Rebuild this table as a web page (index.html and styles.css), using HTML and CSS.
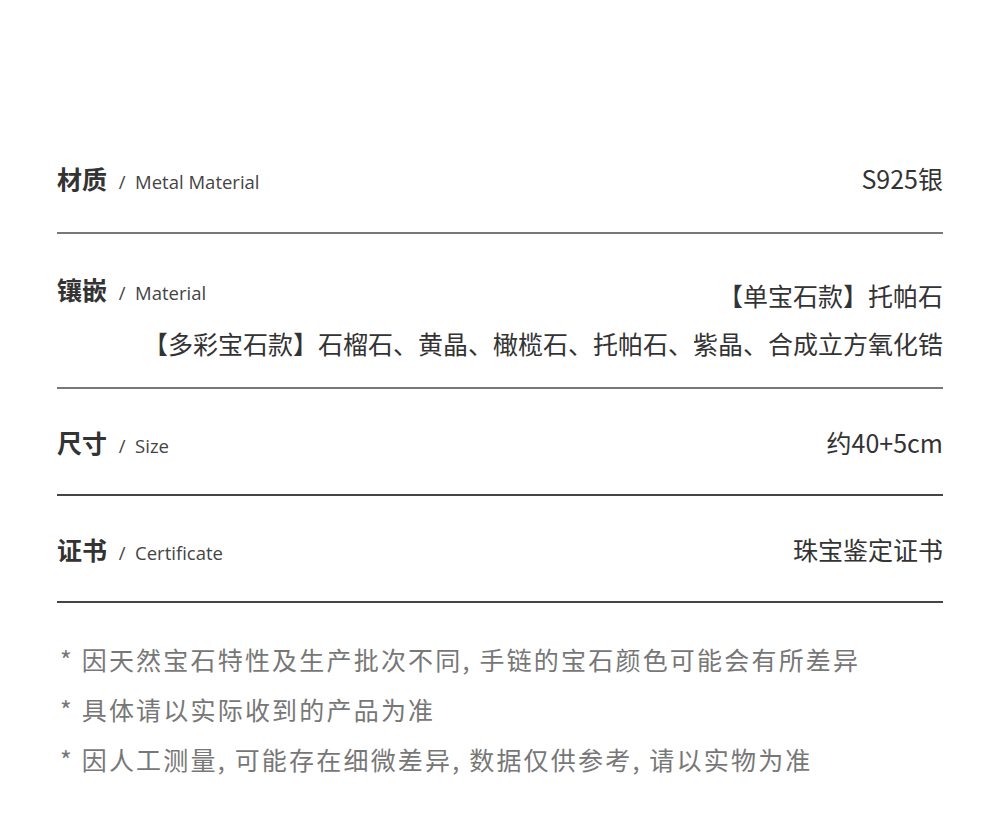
FILE: index.html
```html
<!DOCTYPE html>
<html lang="zh-CN">
<head>
  <meta charset="UTF-8">
  <meta name="viewport" content="width=device-width, initial-scale=1.0">
  <title>产品参数</title>
  <link rel="stylesheet" href="styles.css">
</head>
<body>
  <div class="spec">
    <div class="spec-row spec-row--light">
      <div class="spec-label">材质 <span class="spec-en">/&nbsp;&nbsp;Metal Material</span></div>
      <div class="spec-value">S925银</div>
    </div>

    <div class="spec-row spec-row--light spec-row--multi">
      <div class="spec-label">镶嵌 <span class="spec-en">/&nbsp;&nbsp;Material</span></div>
      <div class="spec-value">【单宝石款】托帕石</div>
      <div class="spec-value spec-value--wide">【多彩宝石款】石榴石、黄晶、橄榄石、托帕石、紫晶、合成立方氧化锆</div>
    </div>

    <div class="spec-row">
      <div class="spec-label">尺寸 <span class="spec-en">/&nbsp;&nbsp;Size</span></div>
      <div class="spec-value">约40+5cm</div>
    </div>

    <div class="spec-row">
      <div class="spec-label">证书 <span class="spec-en">/&nbsp;&nbsp;Certificate</span></div>
      <div class="spec-value">珠宝鉴定证书</div>
    </div>

    <ul class="notes">
      <li>* 因天然宝石特性及生产批次不同, 手链的宝石颜色可能会有所差异</li>
      <li>* 具体请以实际收到的产品为准</li>
      <li>* 因人工测量, 可能存在细微差异, 数据仅供参考, 请以实物为准</li>
    </ul>
  </div>
</body>
</html>
```

FILE: styles.css
```css
body {
  margin: 0;
  background: #fff;
  color: #333;
  font-family: "Noto Sans CJK SC", "Noto Sans", sans-serif;
}
.spec {
  width: 886px;
  margin: 0 0 0 57px;
  padding-top: 125px;
}
.spec-row {
  display: flex;
  justify-content: space-between;
  align-items: flex-start;
  padding: 35px 0 34px;
  border-bottom: 2px solid #444;
}
.spec-row--light {
  border-bottom-color: #777;
  padding-bottom: 36px;
}
.spec-row--multi {
  display: grid;
  grid-template-columns: auto 1fr;
  padding-top: 37px;
  padding-bottom: 20px;
}
.spec-row--multi .spec-value {
  line-height: 48px;
  justify-self: end;
}
.spec-row--multi .spec-value--wide {
  grid-column: 1 / -1;
}
.spec-label {
  font-size: 25px;
  font-weight: bold;
  line-height: 36px;
  color: #333;
  white-space: nowrap;
}
.spec-en {
  font-family: "Open Sans", "Lato", sans-serif;
  font-weight: normal;
  font-size: 18.5px;
  line-height: 1;
  color: #444;
  margin-left: 6px;
}
.spec-value {
  font-size: 25px;
  line-height: 36px;
  color: #333;
  text-align: right;
  white-space: nowrap;
}
.notes {
  list-style: none;
  margin: 31px 0 0 3px;
  padding: 0;
  font-size: 25px;
  line-height: 50px;
  letter-spacing: 2.2px;
  color: #777;
}
```
